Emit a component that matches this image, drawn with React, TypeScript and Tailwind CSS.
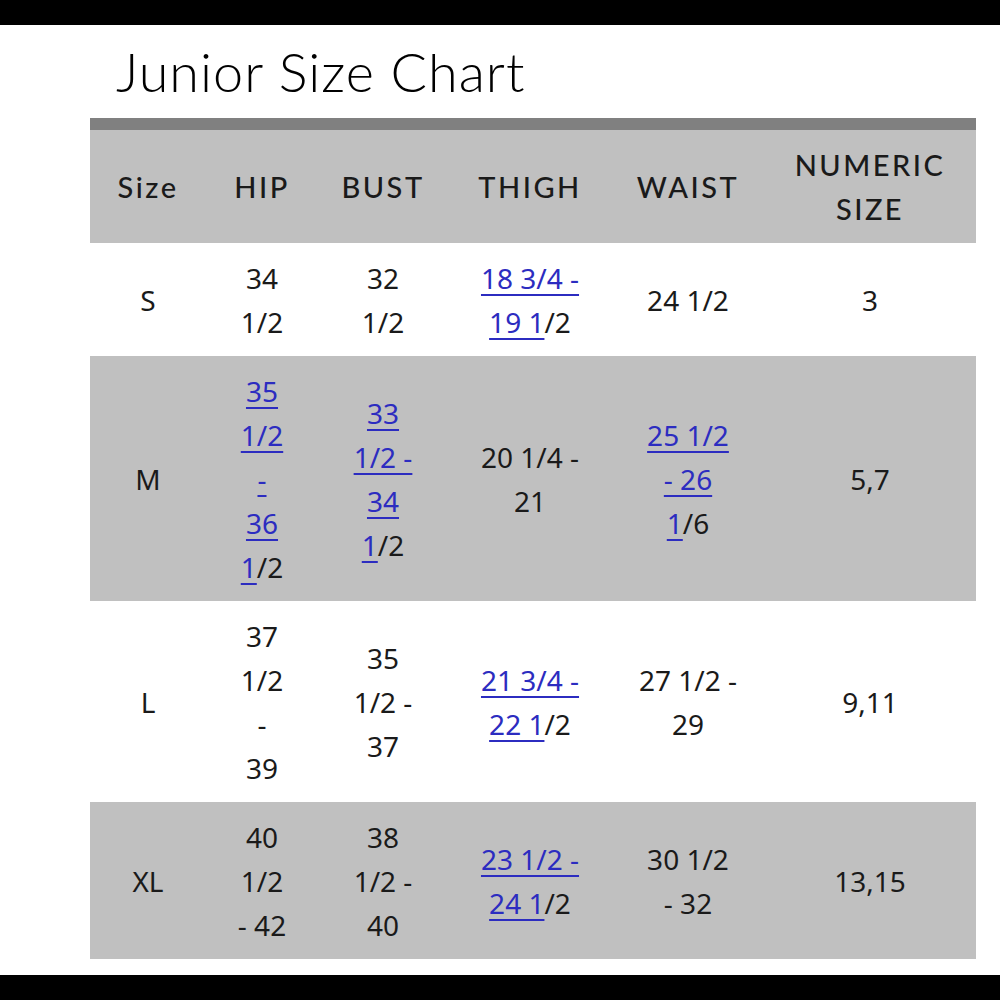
type Seg = [string, boolean?]
type Line = Seg[]

const rows: { size: string; gray: boolean; cells: Line[][] }[] = [
  {
    size: "S",
    gray: false,
    cells: [
      [[["34"]], [["1/2"]]],
      [[["32"]], [["1/2"]]],
      [[["18 3/4 -", true]], [["19 1", true], ["/2"]]],
      [[["24 1/2"]]],
      [[["3"]]],
    ],
  },
  {
    size: "M",
    gray: true,
    cells: [
      [[["35", true]], [["1/2", true]], [["-", true]], [["36", true]], [["1", true], ["/2"]]],
      [[["33", true]], [["1/2 -", true]], [["34", true]], [["1", true], ["/2"]]],
      [[["20 1/4 -"]], [["21"]]],
      [[["25 1/2", true]], [["- 26", true]], [["1", true], ["/6"]]],
      [[["5,7"]]],
    ],
  },
  {
    size: "L",
    gray: false,
    cells: [
      [[["37"]], [["1/2"]], [["-"]], [["39"]]],
      [[["35"]], [["1/2 -"]], [["37"]]],
      [[["21 3/4 -", true]], [["22 1", true], ["/2"]]],
      [[["27 1/2 -"]], [["29"]]],
      [[["9,11"]]],
    ],
  },
  {
    size: "XL",
    gray: true,
    cells: [
      [[["40"]], [["1/2"]], [["- 42"]]],
      [[["38"]], [["1/2 -"]], [["40"]]],
      [[["23 1/2 -", true]], [["24 1", true], ["/2"]]],
      [[["30 1/2"]], [["- 32"]]],
      [[["13,15"]]],
    ],
  },
]

const widths = ["w-[116px]", "w-[112px]", "w-[130px]", "w-[164px]", "w-[152px]", "w-[212px]"]

function Cell({ lines }: { lines: Line[] }) {
  return (
    <div>
      {lines.map((line, i) => (
        <div key={i}>
          {line.map(([text, link], j) =>
            link ? (
              <span key={j} className="text-[#2c2cc0] underline decoration-[2px] underline-offset-[5px]">
                {text}
              </span>
            ) : (
              <span key={j}>{text}</span>
            )
          )}
        </div>
      ))}
    </div>
  )
}

export default function App() {
  return (
    <div className="flex h-[1000px] flex-col bg-white">
      <div className="h-[25px] bg-black" />
      <h1 className="pl-[116px] pt-[16px] font-['Lato',sans-serif] text-[54px] leading-[62px] font-light tracking-[1px] text-black">
        Junior Size Chart
      </h1>
      <div className="mt-[15px] pl-[90px]">
        <table className="w-[886px] border-collapse border-t-[12px] border-[#808080] text-center font-['Noto_Sans',sans-serif] text-[28px] leading-[44px] text-[#1a1a1a]">
          <thead>
            <tr className="bg-[#c0c0c0]">
              {["Size", "HIP", "BUST", "THIGH", "WAIST", "NUMERIC SIZE"].map((h, i) => (
                <th
                  key={h}
                  className={`${widths[i]} pt-[13px] pb-3 font-['Lato',sans-serif] text-[29px] font-medium tracking-[2.5px] text-[#1a1a1a]`}
                >
                  {h === "NUMERIC SIZE" ? (
                    <>
                      NUMERIC
                      <br />
                      SIZE
                    </>
                  ) : (
                    h
                  )}
                </th>
              ))}
            </tr>
          </thead>
          <tbody>
            {rows.map((r) => (
              <tr key={r.size} className={r.gray ? "bg-[#c0c0c0]" : "bg-white"}>
                <td className="pt-[13px] pb-3">{r.size}</td>
                {r.cells.map((c, i) => (
                  <td key={i} className="pt-[13px] pb-3">
                    <Cell lines={c} />
                  </td>
                ))}
              </tr>
            ))}
          </tbody>
        </table>
      </div>
      <div className="mt-auto h-[25px] bg-black" />
    </div>
  )
}
